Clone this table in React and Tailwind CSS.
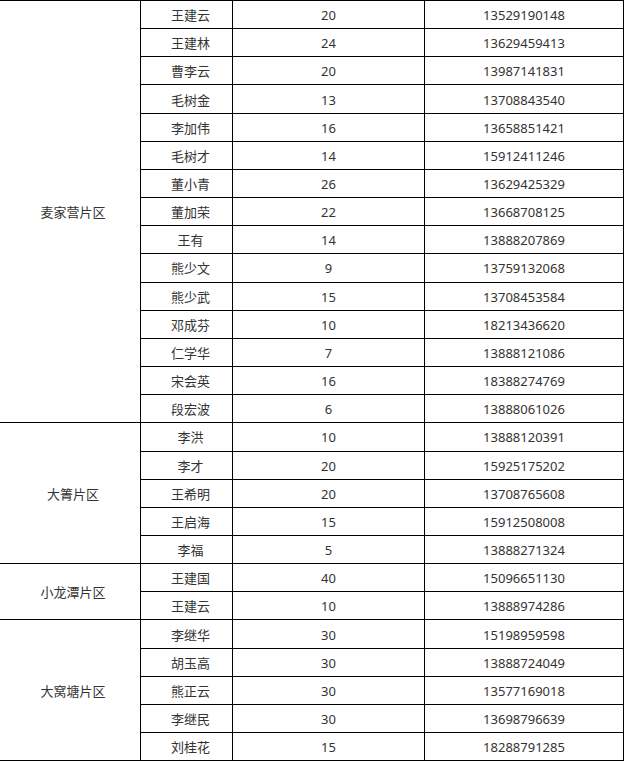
import React from "react";

const groups = [
  {
    name: "麦家营片区",
    span: "row-span-15",
    rows: [
      ["王建云", "20", "13529190148"],
      ["王建林", "24", "13629459413"],
      ["曹李云", "20", "13987141831"],
      ["毛树金", "13", "13708843540"],
      ["李加伟", "16", "13658851421"],
      ["毛树才", "14", "15912411246"],
      ["董小青", "26", "13629425329"],
      ["董加荣", "22", "13668708125"],
      ["王有", "14", "13888207869"],
      ["熊少文", "9", "13759132068"],
      ["熊少武", "15", "13708453584"],
      ["邓成芬", "10", "18213436620"],
      ["仁学华", "7", "13888121086"],
      ["宋会英", "16", "18388274769"],
      ["段宏波", "6", "13888061026"],
    ],
  },
  {
    name: "大箐片区",
    span: "row-span-5",
    rows: [
      ["李洪", "10", "13888120391"],
      ["李才", "20", "15925175202"],
      ["王希明", "20", "13708765608"],
      ["王启海", "15", "15912508008"],
      ["李福", "5", "13888271324"],
    ],
  },
  {
    name: "小龙潭片区",
    span: "row-span-2",
    rows: [
      ["王建国", "40", "15096651130"],
      ["王建云", "10", "13888974286"],
    ],
  },
  {
    name: "大窝塘片区",
    span: "row-span-5",
    rows: [
      ["李继华", "30", "15198959598"],
      ["胡玉高", "30", "13888724049"],
      ["熊正云", "30", "13577169018"],
      ["李继民", "30", "13698796639"],
      ["刘桂花", "15", "18288791285"],
    ],
  },
];

const cell =
  "border-r border-b border-black flex items-center justify-center pt-[2px]";

export default function App() {
  return (
    <div
      className="w-[624px] h-[762px] bg-white text-[#333] text-[13px] leading-none overflow-hidden"
      style={{ fontFamily: '"Noto Sans", "Noto Sans CJK SC", sans-serif' }}
    >
      <div className="grid grid-cols-[141px_92px_192px_199px] grid-rows-[repeat(27,28.17px)] border-t border-black">
        {groups.map((g) => (
          <React.Fragment key={g.name}>
            <div className={`${g.span} ${cell} pl-[6px]`}>{g.name}</div>
            {g.rows.map((r, i) => (
              <React.Fragment key={g.name + i}>
                <div className={`${cell} pl-[8px]`}>{r[0]}</div>
                <div className={cell}>{r[1]}</div>
                <div className={cell}>{r[2]}</div>
              </React.Fragment>
            ))}
          </React.Fragment>
        ))}
      </div>
    </div>
  );
}
